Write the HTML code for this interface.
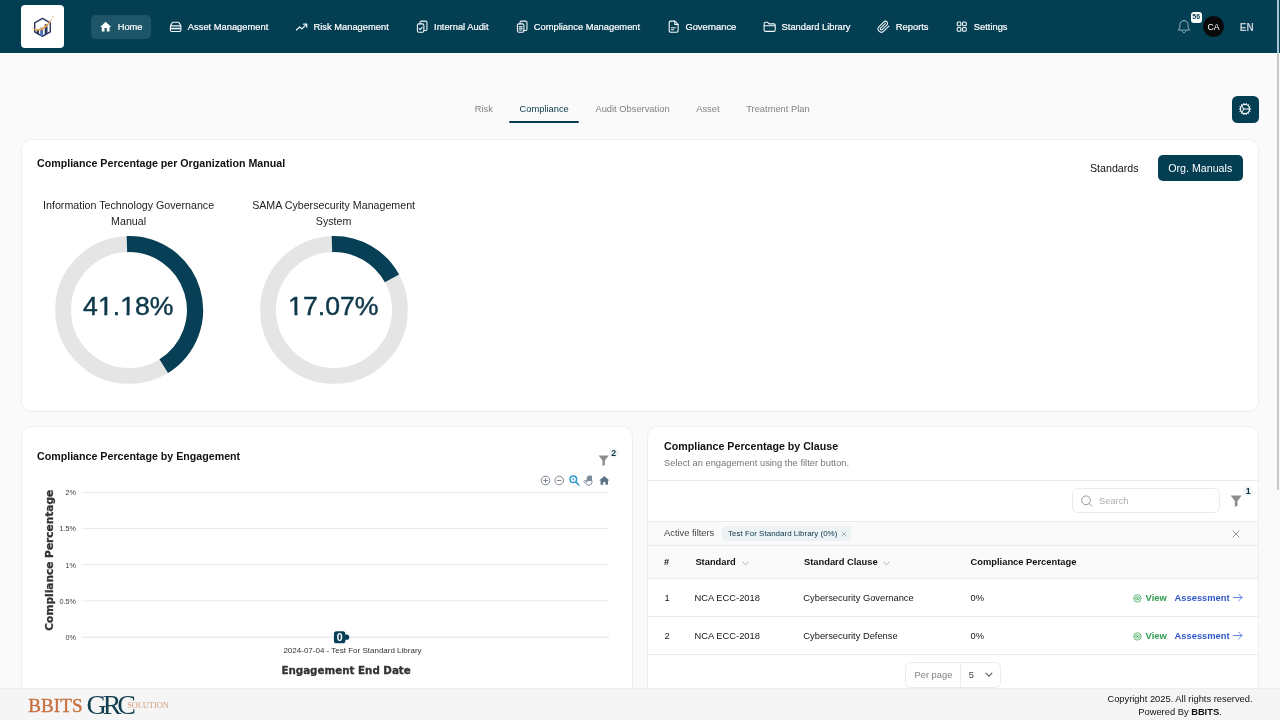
<!DOCTYPE html>
<html lang="en">
<head>
<meta charset="utf-8">
<title>BBITS GRC Solution - Compliance Dashboard</title>
<style>
*{box-sizing:border-box;margin:0;padding:0}
html,body{width:1280px;height:720px;overflow:hidden}
body{background:#fafafa;font-family:"Liberation Sans",Arial,sans-serif;color:#111;position:relative;font-size:10px}
#root{position:absolute;left:0;top:0;width:1280px;height:720px;will-change:transform}
.abs{position:absolute}
/* NAV */
#nav{position:absolute;left:0;top:0;width:1280px;height:53.2px;background:#043e53}
#logo{position:absolute;left:21.2px;top:5.2px;width:42.8px;height:42.8px;background:#fff;border-radius:4px;overflow:hidden}
#menu{position:absolute;left:91px;top:15px;height:24px;display:flex;gap:10.67px}
.mi{display:flex;align-items:center;height:24px;padding:0 8px;border-radius:5px;color:#fff;font-size:9.333px;white-space:nowrap;-webkit-text-stroke:0.2px #fff}
.mi svg{width:13.33px;height:13.33px;margin-right:5.33px;flex:none}
.mi.act{background:#1f5569}
#bell{position:absolute;left:1177px;top:19.3px;width:14px;height:15px}
#badge{position:absolute;left:1190.8px;top:12.4px;width:10.9px;height:10.6px;background:#fff;border-radius:3px;color:#053f54;font-size:7px;font-weight:bold;line-height:10.6px;text-align:center}
#avatar{position:absolute;left:1203.2px;top:16px;width:20.8px;height:20.8px;border-radius:50%;background:#0a0a0a;color:#fff;font-size:8.7px;line-height:22.6px;text-align:center}
#lang{position:absolute;left:1239.8px;top:22.3px;color:#c3ced4;font-weight:bold;font-size:10px;line-height:12px}
#sb{position:absolute;left:1277px;top:0;width:2px;height:490px;background:#c8c8c8}
#sb i{position:absolute;left:0;top:0;width:2px;height:53px;background:#a5c4d2}
/* TABS */
#tabs{position:absolute;left:464.1px;top:103px;display:flex;gap:5.33px}
.tab{padding:0 10.67px;font-size:9.333px;line-height:13px;color:#7f8387;white-space:nowrap}
.tab.on{color:#0a384c}
#tabline{position:absolute;left:509.2px;top:121.2px;width:70.3px;height:1.6px;background:#0b3f55;border-radius:1px}
#gear{position:absolute;left:1232.2px;top:95.8px;width:26.7px;height:26.9px;border-radius:5.5px;background:#043e53}
#gear svg{position:absolute;left:6.3px;top:6.7px;width:14px;height:14px}
/* CARDS */
.card{position:absolute;background:#fff;border:1px solid #eeeeee;border-radius:10.67px}
.ttl{position:absolute;font-weight:bold;font-size:10.67px;line-height:14px;color:#111;white-space:nowrap}
.dlabel{position:absolute;width:200px;text-align:center;font-size:10.67px;line-height:16px;color:#1c1c1c;margin-left:-0.8px}
.fbadge{position:absolute;width:10px;height:10px;border-radius:50%;background:#f0f5f7;color:#0a3345;font-size:8.8px;font-weight:bold;line-height:10px;text-align:center}
.blk{font-family:"DejaVu Sans","Liberation Sans",sans-serif;font-weight:bold}
.sub{font-size:9.333px;line-height:13px;color:#777;white-space:nowrap}
.hl{position:absolute;left:648px;width:610.3px;height:1px;background:#ebebeb}
.th{position:absolute;top:555.9px;font-size:9.333px;line-height:13px;font-weight:bold;color:#111;white-space:nowrap}
.td{position:absolute;font-size:9.333px;line-height:13px;color:#151515;white-space:nowrap;margin-top:0.6px}
.lnk{font-size:9.333px;line-height:13px;font-weight:bold;white-space:nowrap;margin-top:0.6px}
/* FOOTER */
#foot{position:absolute;left:0;top:687.6px;width:1280px;height:33px;background:#f5f5f5;border-top:1px solid #ededed}
</style>
</head>
<body>
<div id="root">

<div id="nav">
  <div id="logo"><svg width="43" height="43" viewBox="0 0 43 43"><polygon points="21.5,13.4 29.29,17.9 29.29,26.9 21.5,31.4 13.71,26.9 13.71,17.9" fill="#fff" stroke="#2a3763" stroke-width="1.4" stroke-linejoin="round"/><path d="M15.6 24.6h2.4v5.4l-2.4-1.4z" fill="#2a3763"/><path d="M19.2 22.8h2.9v8l-1.4 0.8-1.5-0.8z" fill="#4a6db5"/><path d="M23.7 19.2h2.8v9.4l-2.8 1.6z" fill="#2a3763"/><path d="M10.9 22.4C13.5 24.9 18.5 24.6 22.5 21.9 26.3 19.3 29.3 15.6 31.5 12.4 30.3 16.6 27.4 20.7 23.7 23.4 19 26.8 13.3 26.5 10.9 22.4z" fill="#eaa458"/><circle cx="32" cy="11.7" r="0.7" fill="#eaa458"/></svg></div>
  <div id="menu">
    <div class="mi act"><svg viewBox="0 0 24 24"><path fill="#fff" d="M10 20.5v-6h4v6h5v-8h3L12 3.2 2 12.5h3v8z"/></svg><span>Home</span></div>
    <div class="mi"><svg viewBox="0 0 24 24" fill="none" stroke="#f4f8fa" stroke-width="2" stroke-linejoin="round" stroke-linecap="round"><path d="M2.6 10.6 5.4 5.4A2.2 2.2 0 0 1 7.4 4.1h9.2a2.2 2.2 0 0 1 2 1.3l2.8 5.2"/><rect x="2.6" y="10.6" width="18.8" height="10.2" rx="2.2"/><path d="M3.5 15.4h17" stroke-width="2.8" stroke-linecap="butt"/></svg><span>Asset Management</span></div>
    <div class="mi"><svg viewBox="0 0 24 24" fill="none" stroke="#f4f8fa" stroke-width="2.1" stroke-linejoin="round" stroke-linecap="round"><path d="M2.5 18 8.5 12.4l3.8 3.6L20.8 7.8"/><path d="M15.5 7.5h5.6v5.6"/></svg><span>Risk Management</span></div>
    <div class="mi"><svg viewBox="0 0 24 24" fill="none" stroke="#f4f8fa" stroke-width="1.9" stroke-linejoin="round" stroke-linecap="round"><rect x="4.3" y="7" width="11.7" height="15" rx="2.5"/><path d="M9 7V4.5a2.5 2.5 0 0 1 2.5-2.5h7.5a2.5 2.5 0 0 1 2.5 2.5v12a2.5 2.5 0 0 1-2.5 2.5h-3"/><path d="m7.3 15.3 2 2 3.600-4"/></svg><span>Internal Audit</span></div>
    <div class="mi"><svg viewBox="0 0 24 24" fill="none" stroke="#f4f8fa" stroke-width="1.9" stroke-linejoin="round" stroke-linecap="round"><rect x="4.3" y="7" width="11.7" height="15" rx="2.5"/><path d="M9 7V4.5a2.5 2.5 0 0 1 2.5-2.5h7.5a2.5 2.5 0 0 1 2.5 2.5v12a2.5 2.5 0 0 1-2.5 2.5h-3"/><path d="M7.5 12h5.4M7.5 15h5.4M7.5 18h5.4"/></svg><span>Compliance Management</span></div>
    <div class="mi"><svg viewBox="0 0 24 24" fill="none" stroke="#f4f8fa" stroke-width="2" stroke-linejoin="round" stroke-linecap="round"><path d="M14 2H6.5a2.5 2.5 0 0 0-2.5 2.5v15a2.5 2.5 0 0 0 2.5 2.5h11a2.5 2.5 0 0 0 2.5-2.5V8z"/><path d="M14 2v6h6"/><path d="M8 14h7M8 17.5h4" stroke-width="2"/></svg><span>Governance</span></div>
    <div class="mi"><svg viewBox="0 0 24 24" fill="none" stroke="#f4f8fa" stroke-width="1.9" stroke-linejoin="round" stroke-linecap="round"><path d="M2 6.5a2.5 2.5 0 0 1 2.5-2.5h4l2.5 3h8.5a2.5 2.5 0 0 1 2.5 2.5v8.5a2.5 2.5 0 0 1-2.5 2.5h-15a2.5 2.5 0 0 1-2.5-2.5z"/><path d="M2 10.5h20"/></svg><span>Standard Library</span></div>
    <div class="mi"><svg viewBox="0 0 24 24" fill="none" stroke="#f4f8fa" stroke-width="1.9" stroke-linejoin="round" stroke-linecap="round"><path d="m21.44 11.05-9.19 9.19a6 6 0 0 1-8.49-8.49l8.57-8.57A4 4 0 1 1 18 8.84l-8.59 8.57a2 2 0 0 1-2.83-2.83l8.49-8.48"/></svg><span>Reports</span></div>
    <div class="mi"><svg viewBox="0 0 24 24" fill="none" stroke="#f4f8fa" stroke-width="2" stroke-linejoin="round"><rect x="4" y="3.6" width="6.6" height="6.8" rx="1.8"/><rect x="13.6" y="3.6" width="6.6" height="6.8" rx="1.8"/><rect x="4" y="13.4" width="6.6" height="6.8" rx="1.8"/><rect x="13.6" y="13.4" width="6.6" height="6.8" rx="1.8"/></svg><span>Settings</span></div>
  </div>
  <svg id="bell" viewBox="0 0 14 15" fill="none" stroke="#9fc0cf" stroke-width="0.9" stroke-linecap="round" stroke-linejoin="round"><path d="M7 1.6c-2.5 0-4.1 1.9-4.1 4.3v2.5L1.4 11.1h11.2l-1.5-2.7V5.9c0-2.4-1.6-4.3-4.1-4.3z"/><path d="M5.3 12.4c0.3 0.8 0.9 1.2 1.7 1.2s1.4-0.4 1.7-1.2"/></svg>
  <div id="badge">56</div>
  <div id="avatar">CA</div>
  <div id="lang">EN</div>
</div>

<div id="tabs">
  <div class="tab">Risk</div>
  <div class="tab on">Compliance</div>
  <div class="tab">Audit Observation</div>
  <div class="tab">Asset</div>
  <div class="tab">Treatment Plan</div>
</div>
<div id="tabline"></div>
<div id="gear"><svg viewBox="0 0 14 14" fill="none" stroke="#fff" stroke-linecap="round"><circle cx="7" cy="7" r="4.55" stroke-width="1.25"/><path d="M5.7 7H11.3M5.7 7 3.9 3.9M5.7 7 3.9 10.1" stroke-width="1"/><path d="M12.00 7.00L13.10 7.00M11.50 9.17L12.50 9.65M10.12 10.91L10.80 11.77M8.11 11.87L8.36 12.95M5.89 11.87L5.64 12.95M3.88 10.91L3.20 11.77M2.50 9.17L1.50 9.65M2.00 7.00L0.90 7.00M2.50 4.83L1.50 4.35M3.88 3.09L3.20 2.23M5.89 2.13L5.64 1.05M8.11 2.13L8.36 1.05M10.12 3.09L10.80 2.23M11.50 4.83L12.50 4.35" stroke-width="0.95" stroke-linecap="butt"/></svg></div>

<!-- CARD 1 -->
<div class="card" id="c1" style="left:20.8px;top:138.5px;width:1238.2px;height:273.5px"></div>
<div class="ttl" style="left:37px;top:156px">Compliance Percentage per Organization Manual</div>

<div class="dlabel" style="left:29.4px;top:197px">Information Technology Governance<br>Manual</div>
<svg class="abs" style="left:49.4px;top:229.5px" width="160" height="160" viewBox="49.4 229.5 160 160"><circle cx="129.4" cy="309.5" r="65.9" fill="none" stroke="#e5e5e5" stroke-width="15.8"/><path d="M127.33 243.53 A66.00 66.00 0 0 1 164.13 365.62" fill="none" stroke="#063f56" stroke-width="16.2"/><text x="128.7" y="314.9" text-anchor="middle" font-family="Liberation Sans, Arial, sans-serif" font-size="26.67" fill="#0e384a" stroke="#0e384a" stroke-width="0.45">41.18%</text><rect x="99.54" y="311.65" width="5.13" height="4.2" fill="#fff"/><rect x="107.72" y="311.65" width="4.97" height="4.2" fill="#fff"/><rect x="121.78" y="311.65" width="5.13" height="4.2" fill="#fff"/><rect x="129.96" y="311.65" width="4.97" height="4.2" fill="#fff"/></svg>
<div class="dlabel" style="left:234.4px;top:197px">SAMA Cybersecurity Management<br>System</div>
<svg class="abs" style="left:254.4px;top:229.5px" width="160" height="160" viewBox="254.4 229.5 160 160"><circle cx="334.4" cy="309.5" r="65.9" fill="none" stroke="#e5e5e5" stroke-width="15.8"/><path d="M332.33 243.53 A66.00 66.00 0 0 1 392.38 277.96" fill="none" stroke="#063f56" stroke-width="16.2"/><text x="333.7" y="314.9" text-anchor="middle" font-family="Liberation Sans, Arial, sans-serif" font-size="26.67" fill="#0e384a" stroke="#0e384a" stroke-width="0.45">17.07%</text><rect x="289.70" y="311.65" width="5.13" height="4.2" fill="#fff"/><rect x="297.89" y="311.65" width="4.97" height="4.2" fill="#fff"/></svg>
<div class="abs" style="left:1090px;top:161px;font-size:10.67px;line-height:14px;color:#111">Standards</div>
<div class="abs" style="left:1157.5px;top:155px;width:85.5px;height:26.3px;border-radius:5px;background:#043e53;color:#fff;font-size:10.67px;line-height:26.3px;text-align:center">Org. Manuals</div>

<!-- CARD 2 -->
<div class="card" id="c2" style="left:20.8px;top:426px;width:612.2px;height:300px"></div>
<div class="ttl" style="left:37px;top:449px">Compliance Percentage by Engagement</div>

<!-- chart toolbar & filter -->
<svg class="abs" style="left:598px;top:454.5px" width="12" height="12" viewBox="0 0 12 12"><path fill="#8c8c8c" d="M0.6 0.5h10.2L6.9 5.6v4.4L4.5 11V5.6z"/></svg>
<div class="fbadge" style="left:608.7px;top:448.1px">2</div>
<svg class="abs" style="left:540px;top:474px" width="72" height="14" viewBox="540 474 72 14">
  <g fill="none" stroke="#6e7b88" stroke-width="0.9"><circle cx="545.5" cy="480.5" r="4.3"/><path d="M543.2 480.5h4.6M545.5 478.2v4.6"/><circle cx="559.2" cy="480.5" r="4.3"/><path d="M556.9 480.5h4.6"/></g>
  <g fill="none" stroke="#3096d0" stroke-width="1.5"><circle cx="573.3" cy="479.2" r="3.3"/><path d="M575.8 481.8 578.8 485" stroke-linecap="round"/></g><path d="M572.1 479.2h2.4M573.3 478v2.4" stroke="#3096d0" stroke-width="0.7" fill="none"/>
  <path fill="#7b8d9c" d="M586.7 480.6v-3.4a0.65 0.65 0 0 1 1.3 0v-1.1a0.65 0.65 0 0 1 1.3 0v-0.3a0.65 0.65 0 0 1 1.3 0v0.5a0.65 0.65 0 0 1 1.4 0v4.3z"/><path fill="none" stroke="#6e8192" stroke-width="0.9" stroke-linejoin="round" stroke-linecap="round" d="M586.7 480.6h5.3v1.6a3 3 0 0 1-3 3h-0.6a2.8 2.8 0 0 1-2.3-1.3l-1.9-2.3a0.7 0.7 0 0 1 1-0.9l1.5 1.2z"/>
  <path fill="#5f7384" d="M604.3 476 599.2 480.6h1.4v4.2h2.6v-2.9h2.2v2.9h2.6v-4.2h1.4z"/>
</svg>
<!-- chart -->
<svg class="abs" style="left:30px;top:486px" width="590" height="195" viewBox="30 486 590 195" font-family="Liberation Sans, Arial, sans-serif">
  <g stroke="#eaeaea" stroke-width="1"><path d="M81.5 492.5H609M81.5 528.6H609M81.5 564.7H609M81.5 600.8H609"/><path d="M81.5 637.2H609" stroke="#e2e2e2"/></g>
  <g font-size="7.2" fill="#3a3a3a" text-anchor="end"><text x="76" y="495.3">2%</text><text x="76" y="531.4">1.5%</text><text x="76" y="567.5">1%</text><text x="76" y="603.6">0.5%</text><text x="76" y="640">0%</text></g>
  <text transform="translate(53 560.2) rotate(-90)" text-anchor="middle" class="blk" font-size="10.6" fill="#333" stroke="#333" stroke-width="0.3">Compliance Percentage</text>
  <circle cx="346.6" cy="637.2" r="2.6" fill="#063f56"/>
  <rect x="333.9" y="631.3" width="11.5" height="12" rx="2.6" fill="#063f56"/>
  <text x="339.65" y="641.2" text-anchor="middle" font-size="10.67" font-weight="bold" fill="#fff">0</text>
  <text x="352.5" y="653.4" text-anchor="middle" font-size="8" fill="#333">2024-07-04 - Test For Standard Library</text>
  <text x="346.1" y="673.7" text-anchor="middle" class="blk" font-size="10.3" fill="#333" stroke="#333" stroke-width="0.3">Engagement End Date</text>
</svg>

<!-- CARD 3 -->
<div class="card" id="c3" style="left:647.3px;top:426px;width:611.7px;height:300px"></div>
<div class="ttl" style="left:664px;top:439px">Compliance Percentage by Clause</div>

<div class="abs sub" style="left:664px;top:456.5px">Select an engagement using the filter button.</div>
<div class="hl" style="top:480px"></div>
<!-- search -->
<div class="abs" style="left:1071.5px;top:488.2px;width:148px;height:25.3px;border:1px solid #ebebeb;border-radius:5.5px;background:#fff"></div>
<svg class="abs" style="left:1080px;top:494px" width="14" height="14" viewBox="0 0 14 14"><g fill="none" stroke="#9a9a9a" stroke-width="1"><circle cx="6" cy="6.3" r="4.4"/><path d="M9.2 9.6 11.7 12.1" stroke-linecap="round"/></g></svg>
<div class="abs" style="left:1099px;top:494.5px;font-size:9.333px;line-height:13px;color:#adadad">Search</div>
<svg class="abs" style="left:1230px;top:494.5px" width="13" height="13" viewBox="0 0 12 12"><path fill="#8c8c8c" d="M0.6 0.5h10.2L6.9 5.6v4.4L4.5 11V5.6z"/></svg>
<div class="fbadge" style="left:1243.3px;top:485.8px">1</div>
<div class="hl" style="top:521.2px"></div>
<!-- active filters -->
<div class="abs" style="left:648px;top:522px;width:610.3px;height:23px;background:#fafafa"></div>
<div class="abs" style="left:664px;top:527px;font-size:9.333px;line-height:13px;color:#444">Active filters</div>
<div class="abs" style="left:722.2px;top:526.2px;width:128.6px;height:14.8px;border-radius:3px;background:#edf3f5"></div>
<div class="abs" style="left:728px;top:528px;font-size:8px;line-height:11px;color:#0a3548;white-space:nowrap">Test For Standard Library (0%)</div>
<svg class="abs" style="left:841px;top:531px" width="6" height="6" viewBox="0 0 6 6"><path d="M0.7 0.7 5.3 5.3M5.3 0.7 0.7 5.3" stroke="#9aa5ab" stroke-width="0.8" fill="none"/></svg>
<svg class="abs" style="left:1232px;top:529.5px" width="8" height="8" viewBox="0 0 8 8"><path d="M0.7 0.7 7.3 7.3M7.3 0.7 0.7 7.3" stroke="#8a8a8a" stroke-width="0.9" fill="none"/></svg>
<div class="hl" style="top:544.8px"></div>
<!-- table header -->
<div class="abs" style="left:648px;top:545.6px;width:610.3px;height:32.2px;background:#fafafa"></div>
<div class="th" style="left:664px">#</div>
<div class="th" style="left:695.4px">Standard</div>
<svg class="abs chev" style="left:741.5px;top:560.5px" width="7" height="5" viewBox="0 0 7 5"><path d="M0.6 0.8 3.5 3.8 6.4 0.8" stroke="#adadad" stroke-width="1" fill="none"/></svg>
<div class="th" style="left:804px">Standard Clause</div>
<svg class="abs chev" style="left:883px;top:560.5px" width="7" height="5" viewBox="0 0 7 5"><path d="M0.6 0.8 3.5 3.8 6.4 0.8" stroke="#adadad" stroke-width="1" fill="none"/></svg>
<div class="th" style="left:970.6px">Compliance Percentage</div>
<div class="hl" style="top:577.8px"></div>
<!-- rows -->
<div class="td" style="left:664.5px;top:591px">1</div>
<div class="td" style="left:694.6px;top:591px">NCA ECC-2018</div>
<div class="td" style="left:803.3px;top:591px">Cybersecurity Governance</div>
<div class="td" style="left:970.6px;top:591px">0%</div>
<div class="hl" style="top:616px"></div>
<div class="td" style="left:664.5px;top:629px">2</div>
<div class="td" style="left:694.6px;top:629px">NCA ECC-2018</div>
<div class="td" style="left:803.3px;top:629px">Cybersecurity Defense</div>
<div class="td" style="left:970.6px;top:629px">0%</div>
<div class="hl" style="top:654px"></div>
<svg class="abs" style="left:1133px;top:594px" width="8.8" height="8.8" viewBox="0 0 10 10"><g fill="none" stroke="#3aa655" stroke-width="0.9"><circle cx="5" cy="5" r="4.2"/><ellipse cx="5" cy="5" rx="2.5" ry="1.7"/></g><circle cx="5" cy="5" r="0.8" fill="#3aa655"/></svg>
<div class="abs lnk" style="left:1145.6px;top:591px;color:#2e9c4f">View</div>
<div class="abs lnk" style="left:1174.6px;top:591px;color:#2f56c8">Assessment</div>
<svg class="abs" style="left:1232.8px;top:593.3px" width="10" height="9" viewBox="0 0 10 9"><path d="M0.6 4.5H9M5.7 1.2 9 4.5 5.7 7.8" stroke="#4f6fd6" stroke-width="0.9" fill="none" stroke-linecap="round" stroke-linejoin="round"/></svg>
<svg class="abs" style="left:1133px;top:632px" width="8.8" height="8.8" viewBox="0 0 10 10"><g fill="none" stroke="#3aa655" stroke-width="0.9"><circle cx="5" cy="5" r="4.2"/><ellipse cx="5" cy="5" rx="2.5" ry="1.7"/></g><circle cx="5" cy="5" r="0.8" fill="#3aa655"/></svg>
<div class="abs lnk" style="left:1145.6px;top:629px;color:#2e9c4f">View</div>
<div class="abs lnk" style="left:1174.6px;top:629px;color:#2f56c8">Assessment</div>
<svg class="abs" style="left:1232.8px;top:631.3px" width="10" height="9" viewBox="0 0 10 9"><path d="M0.6 4.5H9M5.7 1.2 9 4.5 5.7 7.8" stroke="#4f6fd6" stroke-width="0.9" fill="none" stroke-linecap="round" stroke-linejoin="round"/></svg>

<!-- per page -->
<div class="abs" style="left:905.3px;top:662.2px;width:96px;height:25.6px;border:1px solid #ececec;border-radius:5.5px;background:#fff"></div>
<div class="abs" style="left:960px;top:663px;width:1px;height:24px;background:#ececec"></div>
<div class="abs" style="left:914.5px;top:668.6px;font-size:9.333px;line-height:13px;color:#808080">Per page</div>
<div class="abs" style="left:968.8px;top:668.6px;font-size:9.333px;line-height:13px;color:#444">5</div>
<svg class="abs" style="left:984.5px;top:672.3px" width="8" height="6" viewBox="0 0 8 6"><path d="M0.8 0.8 4 4.3 7.2 0.8" stroke="#555" stroke-width="1.1" fill="none"/></svg>

<div id="foot">
  <div class="abs" style="left:28px;top:0;width:200px;height:33px;font-family:'Liberation Serif','Times New Roman',serif;white-space:nowrap">
    <span class="abs" style="left:0.3px;top:6.5px;font-size:19px;line-height:22px;color:#c76f3f;-webkit-text-stroke:0.4px #c76f3f;letter-spacing:0.1px">BBITS</span>
    <span class="abs" style="left:58.6px;top:0.4px;font-size:28px;line-height:32px;color:#123f50;letter-spacing:-4.1px">GRC</span>
    <span class="abs" style="left:99.2px;top:12.3px;font-size:8.3px;line-height:10px;color:#d39c7b">SOLUTION</span>
  </div>
  <div class="abs" style="left:1080px;top:4px;width:200px;text-align:center;font-size:9.333px;line-height:12.8px;color:#111;margin-top:0.5px">Copyright 2025. All rights reserved.<br>Powered By <b>BBITS</b>.</div>
</div>
<div id="sb"><i></i></div>
</div>
</body>
</html>
